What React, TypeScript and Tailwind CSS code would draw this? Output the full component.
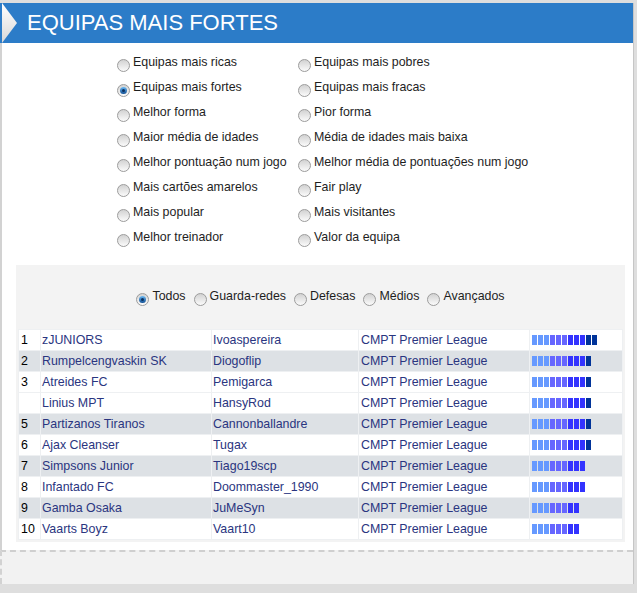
import { FC } from "react";

type Row = {
  rank: string;
  team: string;
  manager: string;
  league: string;
  bar: number;
  shaded: boolean;
};

const leftOptions = [
  "Equipas mais ricas",
  "Equipas mais fortes",
  "Melhor forma",
  "Maior média de idades",
  "Melhor pontuação num jogo",
  "Mais cartões amarelos",
  "Mais popular",
  "Melhor treinador",
];

const rightOptions = [
  "Equipas mais pobres",
  "Equipas mais fracas",
  "Pior forma",
  "Média de idades mais baixa",
  "Melhor média de pontuações num jogo",
  "Fair play",
  "Mais visitantes",
  "Valor da equipa",
];

const positions = ["Todos", "Guarda-redes", "Defesas", "Médios", "Avançados"];

const rows: Row[] = [
  { rank: "1", team: "zJUNIORS", manager: "Ivoaspereira", league: "CMPT Premier League", bar: 11, shaded: false },
  { rank: "2", team: "Rumpelcengvaskin SK", manager: "Diogoflip", league: "CMPT Premier League", bar: 10, shaded: true },
  { rank: "3", team: "Atreides FC", manager: "Pemigarca", league: "CMPT Premier League", bar: 10, shaded: false },
  { rank: "", team: "Linius MPT", manager: "HansyRod", league: "CMPT Premier League", bar: 10, shaded: false },
  { rank: "5", team: "Partizanos Tiranos", manager: "Cannonballandre", league: "CMPT Premier League", bar: 10, shaded: true },
  { rank: "6", team: "Ajax Cleanser", manager: "Tugax", league: "CMPT Premier League", bar: 10, shaded: false },
  { rank: "7", team: "Simpsons Junior", manager: "Tiago19scp", league: "CMPT Premier League", bar: 9, shaded: true },
  { rank: "8", team: "Infantado FC", manager: "Doommaster_1990", league: "CMPT Premier League", bar: 9, shaded: false },
  { rank: "9", team: "Gamba Osaka", manager: "JuMeSyn", league: "CMPT Premier League", bar: 8, shaded: true },
  { rank: "10", team: "Vaarts Boyz", manager: "Vaart10", league: "CMPT Premier League", bar: 8, shaded: false },
];

const segColor = (i: number) =>
  i < 3 ? "bg-[#6699ff]" : i < 6 ? "bg-[#6666ff]" : i < 9 ? "bg-[#3333ff]" : "bg-[#003399]";

// radio antigo estilo windows
const Radio: FC<{ checked?: boolean }> = ({ checked }) => (
  <span className="mt-[6px] flex h-[13px] w-[13px] shrink-0 items-center justify-center rounded-full border border-[#9c9c9c] bg-gradient-to-b from-[#d2d2d2] to-[#fbfbfb]">
    {checked && (
      <span className="flex h-[7px] w-[7px] items-center justify-center rounded-full bg-gradient-to-b from-[#6ab8f2] to-[#0f4f94]">
        <span className="h-[3px] w-[3px] rounded-full bg-[#0b2f5e]" />
      </span>
    )}
  </span>
);

const Bar: FC<{ n: number }> = ({ n }) => (
  <div className="flex gap-[1px] pl-[2px]">
    {Array.from({ length: n }).map((_, i) => (
      <span key={i} className={`h-[10px] w-[5px] ${segColor(i)}`} />
    ))}
  </div>
);

const App: FC = () => {
  return (
    <div
      className="h-[593px] w-[637px] bg-[#dedede] pt-[3px] text-[12.4px] text-[#1e1e1e]"
      style={{ fontFamily: '"Liberation Sans", Arial, sans-serif' }}
    >
      <div className="w-[634px] border-r border-[#c6c6c6]">
        {/* cabeçalho */}
        <div className="flex h-[40px] items-center bg-[#2c7cc8]">
          <svg width="18" height="40" viewBox="0 0 18 40" className="shrink-0">
            <defs>
              <linearGradient id="tri" x1="0" y1="0" x2="0" y2="1">
                <stop offset="0" stopColor="#ffffff" />
                <stop offset="1" stopColor="#d8d8d8" />
              </linearGradient>
            </defs>
            <polygon points="2,0 17,20 2,40" fill="url(#tri)" />
          </svg>
          <h1 className="ml-[9px] text-[22px] leading-[40px] font-normal text-white">
            EQUIPAS MAIS FORTES
          </h1>
        </div>

        <div className="border-l-2 border-[#d2d2d2] bg-white pt-[7px] pb-[8px]">
          {/* tipos de ranking */}
          <div className="grid grid-cols-[181px_auto] pl-[115px]">
            {leftOptions.map((opt, i) => (
              <div key={opt} className="contents">
                <div className="flex h-[25px] items-center gap-[3px] whitespace-nowrap">
                  <Radio checked={i === 1} />
                  <span>{opt}</span>
                </div>
                <div className="flex h-[25px] items-center gap-[3px] whitespace-nowrap">
                  <Radio />
                  <span>{rightOptions[i]}</span>
                </div>
              </div>
            ))}
          </div>

          {/* filtro e tabela */}
          <div className="mt-[15px] mr-[8px] ml-[14px] bg-[#f3f3f3] px-[2px] pt-[21px] pb-[2px]">
            <div className="flex h-[20px] items-center justify-center gap-[8px]">
              {positions.map((p, i) => (
                <div key={p} className="flex items-center gap-[3px]">
                  <Radio checked={i === 0} />
                  <span>{p}</span>
                </div>
              ))}
            </div>

            <table className="mt-[23px] w-[605px] table-fixed border-separate border-spacing-[1px] bg-[#eef0f2]">
              <tbody>
                {rows.map((r) => (
                  <tr key={r.team} className={r.shaded ? "bg-[#dde1e5]" : "bg-white"}>
                    <td className="h-[20px] w-[21px] p-0 pl-[2px] leading-[20px] text-black">{r.rank}</td>
                    <td className="w-[170px] p-0 pl-[1px] leading-[20px] text-[#2a3580]">{r.team}</td>
                    <td className="w-[146px] p-0 pl-[1px] leading-[20px] text-[#2a3580]">{r.manager}</td>
                    <td className="w-[170px] p-0 pl-[2px] leading-[20px] text-[#2a3580]">{r.league}</td>
                    <td className="w-[92px] p-0 align-middle">
                      <Bar n={r.bar} />
                    </td>
                  </tr>
                ))}
              </tbody>
            </table>
          </div>
        </div>

        {/* rodapé */}
        <div className="h-[34px] border-t-2 border-l-2 border-dashed border-t-[#cfcfcf] border-l-[#d2d2d2] bg-[#f2f2f2]" />
      </div>
    </div>
  );
};

export default App;
